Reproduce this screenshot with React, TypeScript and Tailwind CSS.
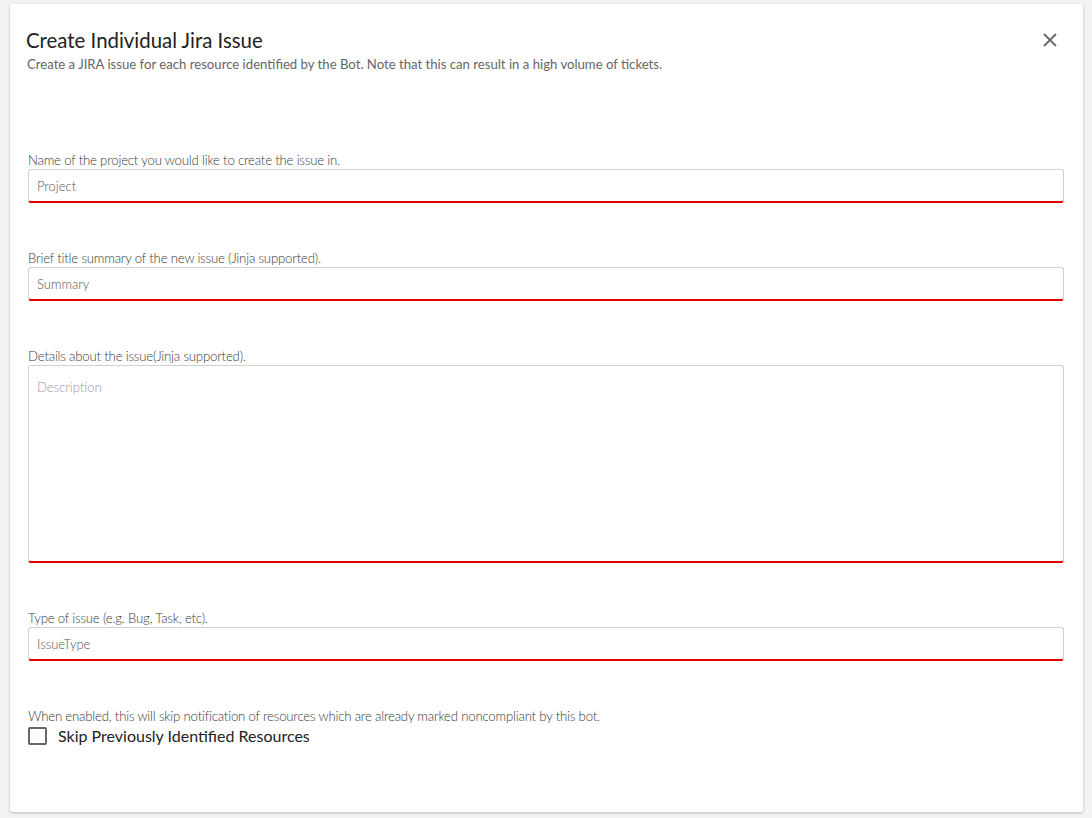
import React, { useState } from 'react';

const labelCls = 'block text-[13.2px] leading-[14px] font-light tracking-[-0.2px] text-[#3a3a3a] mb-[2px]';

const Field = ({ label, placeholder }: { label: string; placeholder: string }) => (
  <div>
    <label className={labelCls}>{label}</label>
    <input
      placeholder={placeholder}
      className="w-full h-[34px] rounded-[3px] border border-[#d0d0d0] border-b-2 border-b-[#e60000] px-[8px] text-[13px] font-light outline-none placeholder:text-[#555]"
    />
  </div>
);

export default function App() {
  const [skip, setSkip] = useState(false);

  return (
    <div className="min-h-screen bg-[#f3f3f3] px-[10px] pt-[4px]" style={{ fontFamily: 'Lato, "Open Sans", sans-serif' }}>
      <div className="h-[808px] w-[1073px] rounded-[3px] bg-white shadow-[0_1px_3px_rgba(0,0,0,0.25)] pl-[18px] pr-[19px] pt-[24px]">
        {/* Header */}
        <div className="relative">
          <h2 className="-ml-[2px] text-[20.4px] leading-[24px] text-[#222]">Create Individual Jira Issue</h2>
          <p className="-ml-[1px] mt-[5px] text-[13.15px] leading-[14px] text-[#666]">
            Create a JIRA issue for each resource identified by the Bot. Note that this can result in a high volume of tickets.
          </p>
          <button className="absolute right-[6px] top-[4px] text-[#666]">
            <svg width="16" height="16" viewBox="0 0 16 16" fill="none" stroke="currentColor" strokeWidth="1.8">
              <path d="M2 2 L14 14 M14 2 L2 14" />
            </svg>
          </button>
        </div>

        {/* Form */}
        <div className="mt-[82px] flex flex-col gap-[48px]">
          <Field label="Name of the project you would like to create the issue in." placeholder="Project" />
          <Field label="Brief title summary of the new issue (Jinja supported)." placeholder="Summary" />
          <div>
            <label className={labelCls}>Details about the issue(Jinja supported).</label>
            <textarea
              placeholder="Description"
              className="block w-full h-[198px] resize-none rounded-[3px] border border-[#d0d0d0] border-b-2 border-b-[#e60000] px-[8px] py-[12px] text-[13px] font-light outline-none placeholder:text-[#999]"
            />
          </div>
          <Field label="Type of issue (e.g. Bug, Task, etc)." placeholder="IssueType" />
          <div>
            <p className="text-[13.2px] leading-[14px] font-light tracking-[-0.2px] text-[#3a3a3a]">
              When enabled, this will skip notification of resources which are already marked noncompliant by this bot.
            </p>
            <label className="mt-[4px] flex items-center gap-[11px] cursor-pointer">
              <span
                onClick={() => setSkip(!skip)}
                className="h-[18px] w-[19px] rounded-[2px] border-2 border-[#666] bg-white"
              >
                {skip && (
                  <svg viewBox="0 0 16 16" className="h-full w-full" fill="none" stroke="#444" strokeWidth="2">
                    <path d="M3 8 L7 12 L13 4" />
                  </svg>
                )}
              </span>
              <span className="text-[16px] leading-[18px] text-[#222]">Skip Previously Identified Resources</span>
            </label>
          </div>
        </div>
      </div>
    </div>
  );
}
